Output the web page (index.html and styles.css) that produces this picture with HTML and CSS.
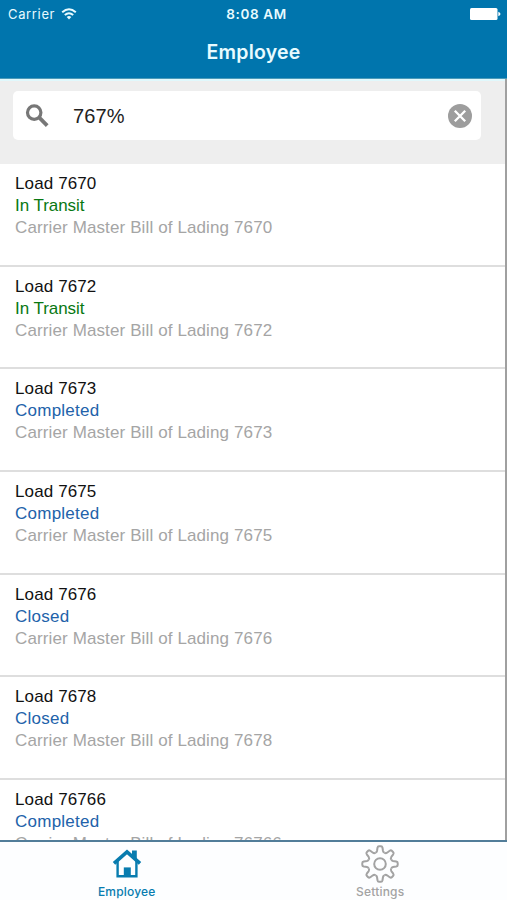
FILE: index.html
```html
<!DOCTYPE html>
<html lang="en">
<head>
<meta charset="utf-8">
<title>Employee</title>
<link rel="stylesheet" href="styles.css">
</head>
<body>
<div class="app">
  <header class="header">
    <div class="status">
      <div class="carrier"><span>Carrier</span>
        <svg class="wifi" viewBox="0 0 16 12" width="16" height="12" fill="none" stroke="currentColor" stroke-width="2"><path d="M1.2 4.3Q8-1.7 14.8 4.3"/><path d="M3.8 7Q8 3.4 12.2 7"/><path d="M5.7 8.9Q8 7.1 10.3 8.9L8 11.5Z" fill="currentColor" stroke="none"/></svg>
      </div>
      <span class="time">8:08 AM</span>
      <svg class="battery" viewBox="0 0 31 12" width="31" height="12" fill="currentColor"><rect width="27.5" height="12" rx="1.5"/><path d="M28.3 3.8Q30.5 4.5 30.5 6T28.3 8.2Z"/></svg>
    </div>
    <h1 class="title">Employee</h1>
  </header>
  <main class="content">
    <div class="search">
      <div class="field">
        <svg class="magnifier" viewBox="0 0 24 24" width="24" height="24" fill="none" stroke="currentColor"><circle cx="9.2" cy="8.6" r="6.7" stroke-width="3.2"/><path d="M13.8 13.2L22.2 21.6" stroke-width="3.8"/></svg>
        <span class="query">767%</span>
        <svg class="clear" viewBox="0 0 24 24" width="24" height="24"><circle cx="12" cy="12" r="12" fill="#9d9d9d"/><path d="M6.8 6.8L17.2 17.2M17.2 6.8L6.8 17.2" stroke="#fff" stroke-width="2.3"/></svg>
      </div>
    </div>
    <ul class="loads">
      <li class="load"><span class="name">Load 7670</span><span class="state transit">In Transit</span><span class="bill">Carrier Master Bill of Lading 7670</span></li>
      <li class="load"><span class="name">Load 7672</span><span class="state transit">In Transit</span><span class="bill">Carrier Master Bill of Lading 7672</span></li>
      <li class="load"><span class="name">Load 7673</span><span class="state">Completed</span><span class="bill">Carrier Master Bill of Lading 7673</span></li>
      <li class="load"><span class="name">Load 7675</span><span class="state">Completed</span><span class="bill">Carrier Master Bill of Lading 7675</span></li>
      <li class="load"><span class="name">Load 7676</span><span class="state">Closed</span><span class="bill">Carrier Master Bill of Lading 7676</span></li>
      <li class="load"><span class="name">Load 7678</span><span class="state">Closed</span><span class="bill">Carrier Master Bill of Lading 7678</span></li>
      <li class="load"><span class="name">Load 76766</span><span class="state">Completed</span><span class="bill">Carrier Master Bill of Lading 76766</span></li>
    </ul>
  </main>
  <nav class="tabs">
    <div class="tab active">
      <svg class="icon" viewBox="0 0 38 38" width="38" height="38"><path d="M6 18.4L19 6.8L32 18.4" fill="none" stroke="currentColor" stroke-width="3.6"/><path d="M24 5.6h4.8v11l-4.8-4z" fill="currentColor"/><path d="M9.6 16V31.2H28.4V16" fill="none" stroke="currentColor" stroke-width="2.4"/><path d="M15.8 22.4h7v9h-7z" fill="currentColor"/></svg>
      <span>Employee</span>
    </div>
    <div class="tab">
      <svg class="icon" viewBox="-19 -19 38 38" width="38" height="38" fill="none" stroke="currentColor" stroke-width="2">
        <defs><path id="tooth" d="M-4.75-11.45Q-3.4-11.3-3-13L-2.5-16.2Q-2.2-17.7-1-17.7H1Q2.2-17.7 2.5-16.2L3-13Q3.4-11.3 4.75-11.45"/></defs>
        <use href="#tooth"/><use href="#tooth" transform="rotate(45)"/><use href="#tooth" transform="rotate(90)"/><use href="#tooth" transform="rotate(135)"/><use href="#tooth" transform="rotate(180)"/><use href="#tooth" transform="rotate(225)"/><use href="#tooth" transform="rotate(270)"/><use href="#tooth" transform="rotate(315)"/>
        <circle r="5.8"/>
      </svg>
      <span>Settings</span>
    </div>
  </nav>
</div>
</body>
</html>
```
FILE: styles.css
```css
* { box-sizing: border-box; }
body { margin: 0; background: #fff; font-family: "Liberation Sans", Arial, sans-serif; }
.app { width: 507px; height: 900px; display: flex; flex-direction: column; overflow: hidden; }
.header { height: 79px; flex: none; background: #0075ad; color: #e8fbff; font-family: Inter, sans-serif; border-bottom: 1px solid #4b9ab9; }
.status { height: 27px; display: grid; grid-template-columns: 1fr auto 1fr; align-items: center; padding: 0 6px 0 8px; font-size: 13px; letter-spacing: .65px; }
.carrier { display: flex; align-items: center; gap: 6px; }
.time { font-weight: 600; font-size: 13.5px; margin-left: 4px; }
.battery { justify-self: end; color: #fff; }
.title { margin: 0; height: 51px; line-height: 51px; text-align: center; font-size: 19.5px; font-weight: 600; letter-spacing: .2px; }
.content { height: 761px; flex: none; overflow: hidden; border-right: 2px solid #a0a0a0; }
.search { height: 85px; background: #eee; border-top: 2px solid #e0f8fc; padding: 10px 24px 0 13px; }
.field { height: 49px; background: #fff; border-radius: 5px; display: flex; align-items: center; padding: 0 9px 0 12px; }
.magnifier { color: #777; }
.query { flex: 1; margin-left: 24px; padding-top: 1px; font-size: 20px; letter-spacing: .15px; color: #222; }
.loads { list-style: none; margin: 0; padding: 0; }
.load { height: 102.7px; padding: 9px 15px 0; display: flex; flex-direction: column; border-bottom: 2px solid #dedede; font-size: 17px; line-height: 22px; white-space: nowrap; letter-spacing: .12px; }
.name { color: #111; }
.state { color: #2262aa; letter-spacing: .25px; }
.transit { color: #087812; letter-spacing: -.05px; }
.bill { color: #a5a5a5; }
.tabs { flex: 1; display: flex; border-top: 2px solid #527d99; background: #fdfeff; }
.tab { flex: 1; display: flex; flex-direction: column; align-items: center; padding-top: 3px; color: #a3a3a3; font: 500 12px/18px Inter, sans-serif; letter-spacing: .2px; }
.active { color: #087caf; }
```
